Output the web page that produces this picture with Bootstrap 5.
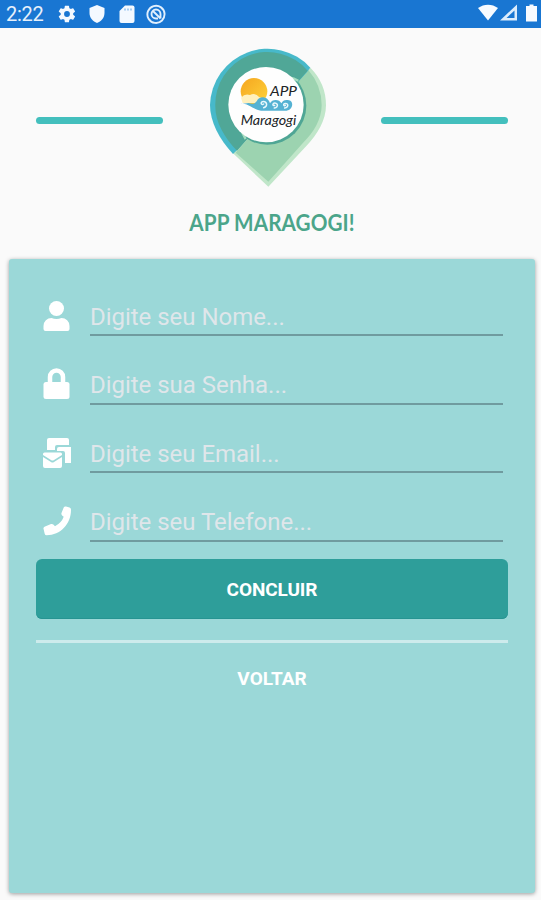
<!DOCTYPE html>
<html lang="pt-BR">
<head>
<meta charset="utf-8">
<meta name="viewport" content="width=device-width, initial-scale=1">
<title>App Maragogi</title>
<link href="https://cdn.jsdelivr.net/npm/bootstrap@5.3.0/dist/css/bootstrap.min.css" rel="stylesheet">
<style>
body{background:#fafafa;font-family:Roboto,sans-serif;height:900px;overflow:hidden}
.status{height:28px;background:#1976d2;color:#e6f0fb;font-size:20px;line-height:28px;padding-left:6px}
.status svg{display:block;flex:none}
.clock{width:51px;letter-spacing:-.3px}
.brand{height:231px;padding:12px 33px 0 36px}
.rule{width:127px;height:7px;border-radius:4px;background:#43bfbd;margin-top:76.5px}
.pin{margin-right:8px}
.brand-title{font:700 22px/30px Lato,sans-serif;color:#4ba58a;letter-spacing:.1px;margin:13px -6px 0;transform:scaleX(.94);white-space:nowrap}
.panel{width:526px;height:634px;margin-left:9px;background:#9bd8d8;border-radius:3px;box-shadow:0 1px 4px rgba(0,0,0,.38);padding:25px 27px 0}
.field{height:68.5px;padding:0 5px 0 7px}
.field svg{width:28px;height:32px;margin-top:15.5px;flex:none}
.field .form-control{height:52px;margin-left:19px;padding:15px 0 0;border:0;border-bottom:2px solid #709b9f;border-radius:0;background:none;box-shadow:none;font-size:24px;line-height:36px;color:#fff;letter-spacing:-.03px}
.field .form-control::placeholder{color:#dfe6ea;opacity:1}
.finish{height:60px;margin-top:.5px;background:#2e9e9a;border:0;border-radius:6px;color:#fff;font-size:19px;font-weight:700;letter-spacing:-.1px;padding:9px 0 6px;box-shadow:inset 0 -1px #279492}
.divider{height:3px;background:#cdebec;margin-top:21.5px}
.back{height:50px;margin-top:11px;border:0;color:#fff;font-size:19px;font-weight:700;padding:0}
</style>
</head>
<body>
<header class="status d-flex align-items-center">
  <span class="clock">2:22</span>
  <svg width="20" height="20" viewBox="0 0 24 24" fill="#f4f9ff"><path d="M19.4 13a7.500 7.500 0 0 0 0-2l2.100-1.600a.5.5 0 0 0 .1-.6l-2-3.500a.5.5 0 0 0-.6-.2l-2.500 1a7.300 7.300 0 0 0-1.700-1L14.400 2.400a.5.5 0 0 0-.5-.4h-4a.5.5 0 0 0-.5.4L9 5.100a7.300 7.300 0 0 0-1.700 1l-2.500-1a.5.5 0 0 0-.6.2l-2 3.500a.5.5 0 0 0 .1.600L4.500 11a7.500 7.500 0 0 0 0 2l-2.200 1.600a.5.5 0 0 0-.1.600l2 3.500c.1.200.4.300.6.200l2.500-1a7.300 7.300 0 0 0 1.700 1l.4 2.700c0 .2.200.4.500.4h4c.3 0 .5-.2.5-.4l.4-2.700a7.300 7.300 0 0 0 1.700-1l2.500 1c.2.100.5 0 .6-.2l2-3.500a.5.5 0 0 0-.1-.6zM12 15.500a3.500 3.500 0 1 1 0-7 3.500 3.500 0 0 1 0 7z"/></svg>
  <svg class="ms-2 me-2" width="24" height="20" viewBox="0 0 24 20" fill="#f4f9ff"><path d="M12 1l7.500 3v5c0 5-3.500 8.500-7.500 10C8 17.500 4.500 14 4.500 9V4z"/></svg>
  <svg width="20" height="20" viewBox="0 0 20 20"><path d="M8 1.500h7.500a2 2 0 0 1 2 2V17a2 2 0 0 1-2 2h-11a2 2 0 0 1-2-2V7z" fill="#f4f9ff"/><path d="M8 4.500v2M11 4.500v2M14 4.500v2" stroke="#8fc0ee" stroke-width="1.500"/></svg>
  <svg style="margin-left:9px" width="20" height="20" viewBox="0 0 20 20" fill="none" stroke="#e1effd" stroke-width="1.900"><path d="M16 16.500A8.600 8.600 0 1 1 18.600 10c0 3-1.200 5-2.600 6.500z"/><path d="M6.500 6.500l8 8M14.500 14.500V10A4.500 4.500 0 1 0 10 14.500h2"/></svg>
  <svg class="ms-auto" width="64" height="24" viewBox="0 0 64 24"><path d="M1 6C7 1.500 15 1.500 21 6L11 18.500z" fill="#f8fbff"/><path fill-rule="evenodd" d="M40 2.500v16H23zM37.500 8.500v7.500h-8z" fill="#dcecfc"/><path d="M52.500 4V2.500h4V4H60v15.500H49V4z" fill="#f8fbff"/></svg>
</header>

<section class="brand d-flex justify-content-between align-items-start">
  <div class="rule"></div>
  <div class="d-flex flex-column align-items-center">
    <svg class="pin" width="135" height="155" viewBox="0 0 405 465" role="img" aria-label="App Maragogi">
      <defs>
        <linearGradient id="sun" x2="1" y2="1"><stop stop-color="#f5a51f"/><stop offset="1" stop-color="#ffd43b"/></linearGradient>
      </defs>
      <path d="M328 83Q375 130 375 196C375 240 350 283 316 318L202 440L96 340z" fill="#c0e6c9"/>
      <path d="M322 90Q362 136 362 196C362 237 338 278 305 310L202 425L104 338z" fill="#9cd3b0"/>
      <path d="M96 342C55 298 27 245 27 195A173 173 0 0 1 328 83L316 98L106 332z" fill="#47b9ca"/>
      <path d="M108 332C70 292 43 246 43 200A157 157 0 0 1 320 92L108 332z" fill="#50a797"/>
      <circle cx="199" cy="197" r="117" fill="#4fa695"/>
      <path d="M134 297A122 122 0 0 1 292 122" fill="none" stroke="#a5dcc0" stroke-width="7"/>
      <circle cx="195" cy="194" r="113" fill="#fefefe"/>
      <circle cx="159" cy="154" r="40" fill="url(#sun)"/>
      <path d="M120 173q12-14 27-8q16-8 28 7q10 0 14 17h-64z" fill="#fff0bd"/>
      <path d="M119 192C142 188 152 207 180 212H257C275 210 280 185 264 181C249 178 244 185 241 190C236 177 213 176 207 190C202 168 174 166 168 182C160 193 154 193 143 189z" fill="#55b2d3"/>
      <path d="M188 203C203 199 197 182 184 185C177 189 182 196 188 192M220 204C235 201 230 186 218 190C213 193 217 199 221 196M251 204C266 201 261 187 250 191C246 194 249 199 253 196" fill="none" stroke="#e9f8fc" stroke-width="4.500" stroke-linecap="round"/>
      <text x="207" y="169" textLength="81" lengthAdjust="spacingAndGlyphs" font-family="Lato,sans-serif" font-size="43" font-style="italic" fill="#202326">APP</text>
      <text x="119" y="256" textLength="167" lengthAdjust="spacingAndGlyphs" font-family="Lato,sans-serif" font-size="38" font-style="italic" font-weight="400" fill="#202326">Maragogi</text>
    </svg>
    <h1 class="brand-title">APP MARAGOGI!</h1>
  </div>
  <div class="rule"></div>
</section>

<main class="panel">
  <form>
    <div class="field d-flex align-items-start">
      <svg viewBox="0 0 28 32" fill="#fff"><circle cx="13.500" cy="8.500" r="7.500"/><path d="M.5 29v-3a8 8 0 0 1 8-8q5 2 10 0a8 8 0 0 1 8 8v3q0 2-2 2h-22q-2 0-2-2z"/></svg>
      <input class="form-control" type="text" placeholder="Digite seu Nome..." aria-label="Nome">
    </div>
    <div class="field d-flex align-items-start">
      <svg viewBox="0 0 28 32"><path d="M7 16V9a6.500 6.500 0 0 1 13 0v7" fill="none" stroke="#fff" stroke-width="4.500"/><rect x=".5" y="14" width="26" height="17" rx="2.500" fill="#fff"/></svg>
      <input class="form-control" type="password" placeholder="Digite sua Senha..." aria-label="Senha">
    </div>
    <div class="field d-flex align-items-start">
      <svg viewBox="0 0 28 32" fill="#fff"><path d="M4 13V3q0-2 2-2h18q2 0 2 2v5H14q-2 0-2 2v3z"/><path d="M14 12q0-2 2-2h12v16h-6V16q0-2-2-2h-6z"/><path d="M0 17q0-1.500 1.500-1.500h16q1.500 0 1.500 1.500v1l-8 5q-1.500 1-3 0L0 18z"/><path d="M0 20l8 5q1.500 1 3 0l8-5v9q0 2-2 2H2q-2 0-2-2z"/></svg>
      <input class="form-control" type="email" placeholder="Digite seu Email..." aria-label="Email">
    </div>
    <div class="field d-flex align-items-start">
      <svg viewBox="0 0 28 32" fill="#fff"><path d="M26.500 2.600L23 1.600q-1.600-.4-2.300 1L18.500 8q-.5 1.400.6 2.400l1.600 1.400Q18.500 18 12 21.200l-1.700-1.700q-1-1-2.300-.4l-6.500 2.700q-1.300.7-1 2l1.200 5q.4 1.500 2 1.500C17.500 30.300 28 19 28 4.800q0-1.700-1.500-2.200z"/></svg>
      <input class="form-control" type="tel" placeholder="Digite seu Telefone..." aria-label="Telefone">
    </div>
    <button type="button" class="finish btn w-100 d-block">CONCLUIR</button>
    <div class="divider"></div>
    <button type="button" class="back btn w-100 d-block">VOLTAR</button>
  </form>
</main>
<script src="https://cdn.jsdelivr.net/npm/bootstrap@5.3.0/dist/js/bootstrap.bundle.min.js"></script>
</body>
</html>
